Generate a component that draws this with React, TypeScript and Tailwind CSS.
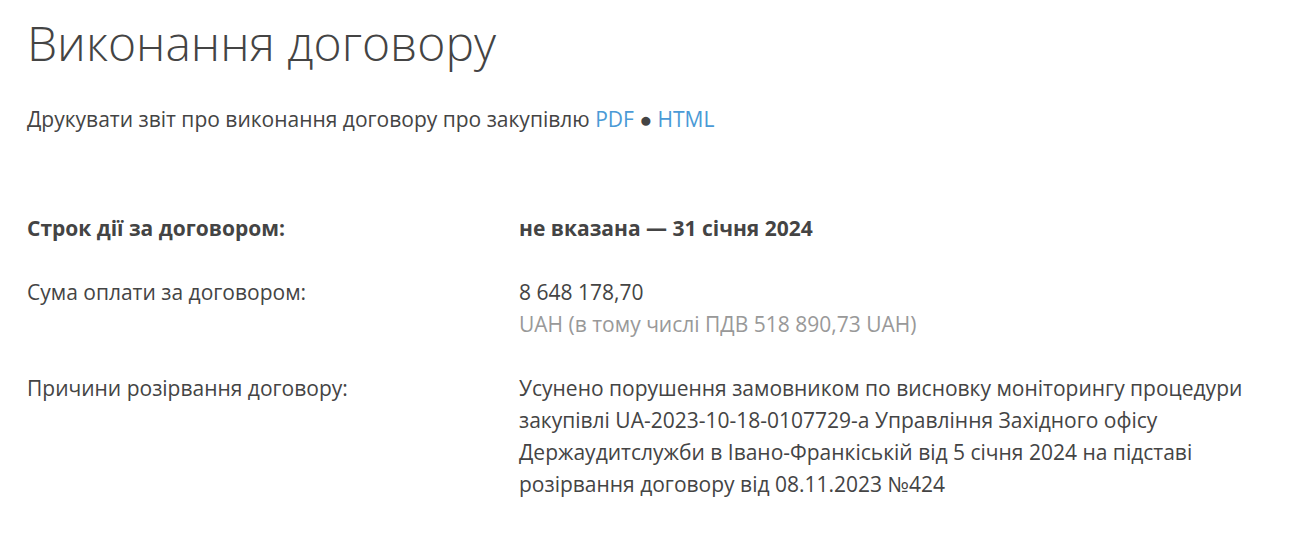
export default function App() {
  return (
    <div className="min-h-screen bg-white px-[27px] pt-[11px] font-['Open_Sans',sans-serif] text-[#444]">
      <h1 className="text-[48px] font-light leading-[64px] text-[#444]">
        Виконання договору
      </h1>
      <p className="mt-[28px] text-[21px] leading-[32px]">
        Друкувати звіт про виконання договору про закупівлю{" "}
        <a href="#" className="text-[#4a9ad6]">
          PDF
        </a>{" "}
        ●{" "}
        <a href="#" className="text-[#4a9ad6]">
          HTML
        </a>
      </p>
      <div className="mt-[77px] flex flex-col gap-[32px] text-[21px] leading-[32px]">
        <div className="grid grid-cols-[492px_740px] font-bold">
          <div>Строк дії за договором:</div>
          <div>не вказана — 31 січня 2024</div>
        </div>
        <div className="grid grid-cols-[492px_740px]">
          <div>Сума оплати за договором:</div>
          <div>
            <div>8 648 178,70</div>
            <div className="text-[#999]">UAH (в тому числі ПДВ 518 890,73 UAH)</div>
          </div>
        </div>
        <div className="grid grid-cols-[492px_740px]">
          <div>Причини розірвання договору:</div>
          <div>
            Усунено порушення замовником по висновку моніторингу процедури
            закупівлі UA-2023-10-18-0107729-a Управління Західного офісу
            Держаудитслужби в Івано-Франкіській від 5 січня 2024 на підставі
            розірвання договору від 08.11.2023 №424
          </div>
        </div>
      </div>
    </div>
  );
}
